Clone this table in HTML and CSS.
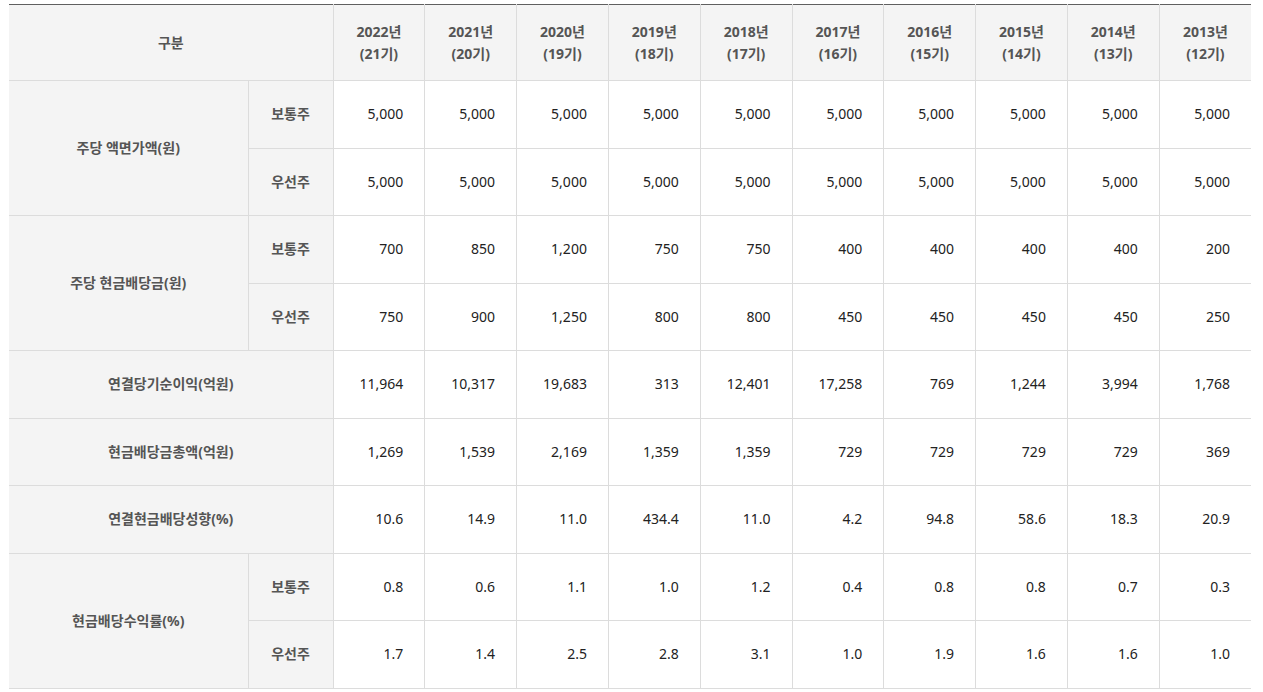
FILE: index.html
```html
<!DOCTYPE html>
<html lang="ko">
<head>
<meta charset="utf-8">
<title>배당 정보</title>
<link rel="stylesheet" href="styles.css">
</head>
<body>
<table class="div-table">
  <colgroup>
    <col class="c-label"><col class="c-sub">
    <col class="c-year"><col class="c-year"><col class="c-year"><col class="c-year"><col class="c-year">
    <col class="c-year"><col class="c-year"><col class="c-year"><col class="c-year"><col class="c-year">
  </colgroup>
  <thead>
    <tr class="head-row">
      <th colspan="2">구분</th>
      <th>2022년<br>(21기)</th>
      <th>2021년<br>(20기)</th>
      <th>2020년<br>(19기)</th>
      <th>2019년<br>(18기)</th>
      <th>2018년<br>(17기)</th>
      <th>2017년<br>(16기)</th>
      <th>2016년<br>(15기)</th>
      <th>2015년<br>(14기)</th>
      <th>2014년<br>(13기)</th>
      <th>2013년<br>(12기)</th>
    </tr>
  </thead>
  <tbody>
    <tr>
      <th rowspan="2">주당 액면가액(원)</th>
      <th>보통주</th>
      <td>5,000</td><td>5,000</td><td>5,000</td><td>5,000</td><td>5,000</td><td>5,000</td><td>5,000</td><td>5,000</td><td>5,000</td><td>5,000</td>
    </tr>
    <tr>
      <th>우선주</th>
      <td>5,000</td><td>5,000</td><td>5,000</td><td>5,000</td><td>5,000</td><td>5,000</td><td>5,000</td><td>5,000</td><td>5,000</td><td>5,000</td>
    </tr>
    <tr>
      <th rowspan="2">주당 현금배당금(원)</th>
      <th>보통주</th>
      <td>700</td><td>850</td><td>1,200</td><td>750</td><td>750</td><td>400</td><td>400</td><td>400</td><td>400</td><td>200</td>
    </tr>
    <tr>
      <th>우선주</th>
      <td>750</td><td>900</td><td>1,250</td><td>800</td><td>800</td><td>450</td><td>450</td><td>450</td><td>450</td><td>250</td>
    </tr>
    <tr>
      <th colspan="2">연결당기순이익(억원)</th>
      <td>11,964</td><td>10,317</td><td>19,683</td><td>313</td><td>12,401</td><td>17,258</td><td>769</td><td>1,244</td><td>3,994</td><td>1,768</td>
    </tr>
    <tr>
      <th colspan="2">현금배당금총액(억원)</th>
      <td>1,269</td><td>1,539</td><td>2,169</td><td>1,359</td><td>1,359</td><td>729</td><td>729</td><td>729</td><td>729</td><td>369</td>
    </tr>
    <tr>
      <th colspan="2">연결현금배당성향(%)</th>
      <td>10.6</td><td>14.9</td><td>11.0</td><td>434.4</td><td>11.0</td><td>4.2</td><td>94.8</td><td>58.6</td><td>18.3</td><td>20.9</td>
    </tr>
    <tr>
      <th rowspan="2">현금배당수익률(%)</th>
      <th>보통주</th>
      <td>0.8</td><td>0.6</td><td>1.1</td><td>1.0</td><td>1.2</td><td>0.4</td><td>0.8</td><td>0.8</td><td>0.7</td><td>0.3</td>
    </tr>
    <tr>
      <th>우선주</th>
      <td>1.7</td><td>1.4</td><td>2.5</td><td>2.8</td><td>3.1</td><td>1.0</td><td>1.9</td><td>1.6</td><td>1.6</td><td>1.0</td>
    </tr>
  </tbody>
</table>
</body>
</html>
```

FILE: styles.css
```css
html, body {
  margin: 0;
  padding: 0;
  background: #fff;
}

body {
  padding: 4px 12px 0 9px;
  font-family: "Noto Sans", "Noto Sans CJK KR", sans-serif;
  font-size: 14px;
  color: #222;
}

.div-table {
  width: 1242px;
  border-collapse: collapse;
  table-layout: fixed;
  border-top: 1px solid #5f5f5f;
}

.c-label { width: 239px; }
.c-sub { width: 85px; }
.c-year { width: 91.8px; }

.div-table th,
.div-table td {
  border: 1px solid #dcdcdc;
  padding: 0;
  vertical-align: middle;
  line-height: 22px;
}

.div-table tr:first-child th,
.div-table tr:first-child td {
  border-top: 0;
}

.div-table th {
  background: #f4f4f4;
  color: #555;
  font-weight: 700;
  text-align: center;
}

.div-table td {
  background: #fff;
  text-align: right;
  padding-right: 21px;
  color: #222;
  font-weight: 400;
}

.div-table th:first-child,
.div-table td:first-child {
  border-left: 0;
}

.div-table th:last-child,
.div-table td:last-child {
  border-right: 0;
}

.head-row {
  height: 76px;
}

.div-table tbody tr {
  height: 67.5px;
}
```
